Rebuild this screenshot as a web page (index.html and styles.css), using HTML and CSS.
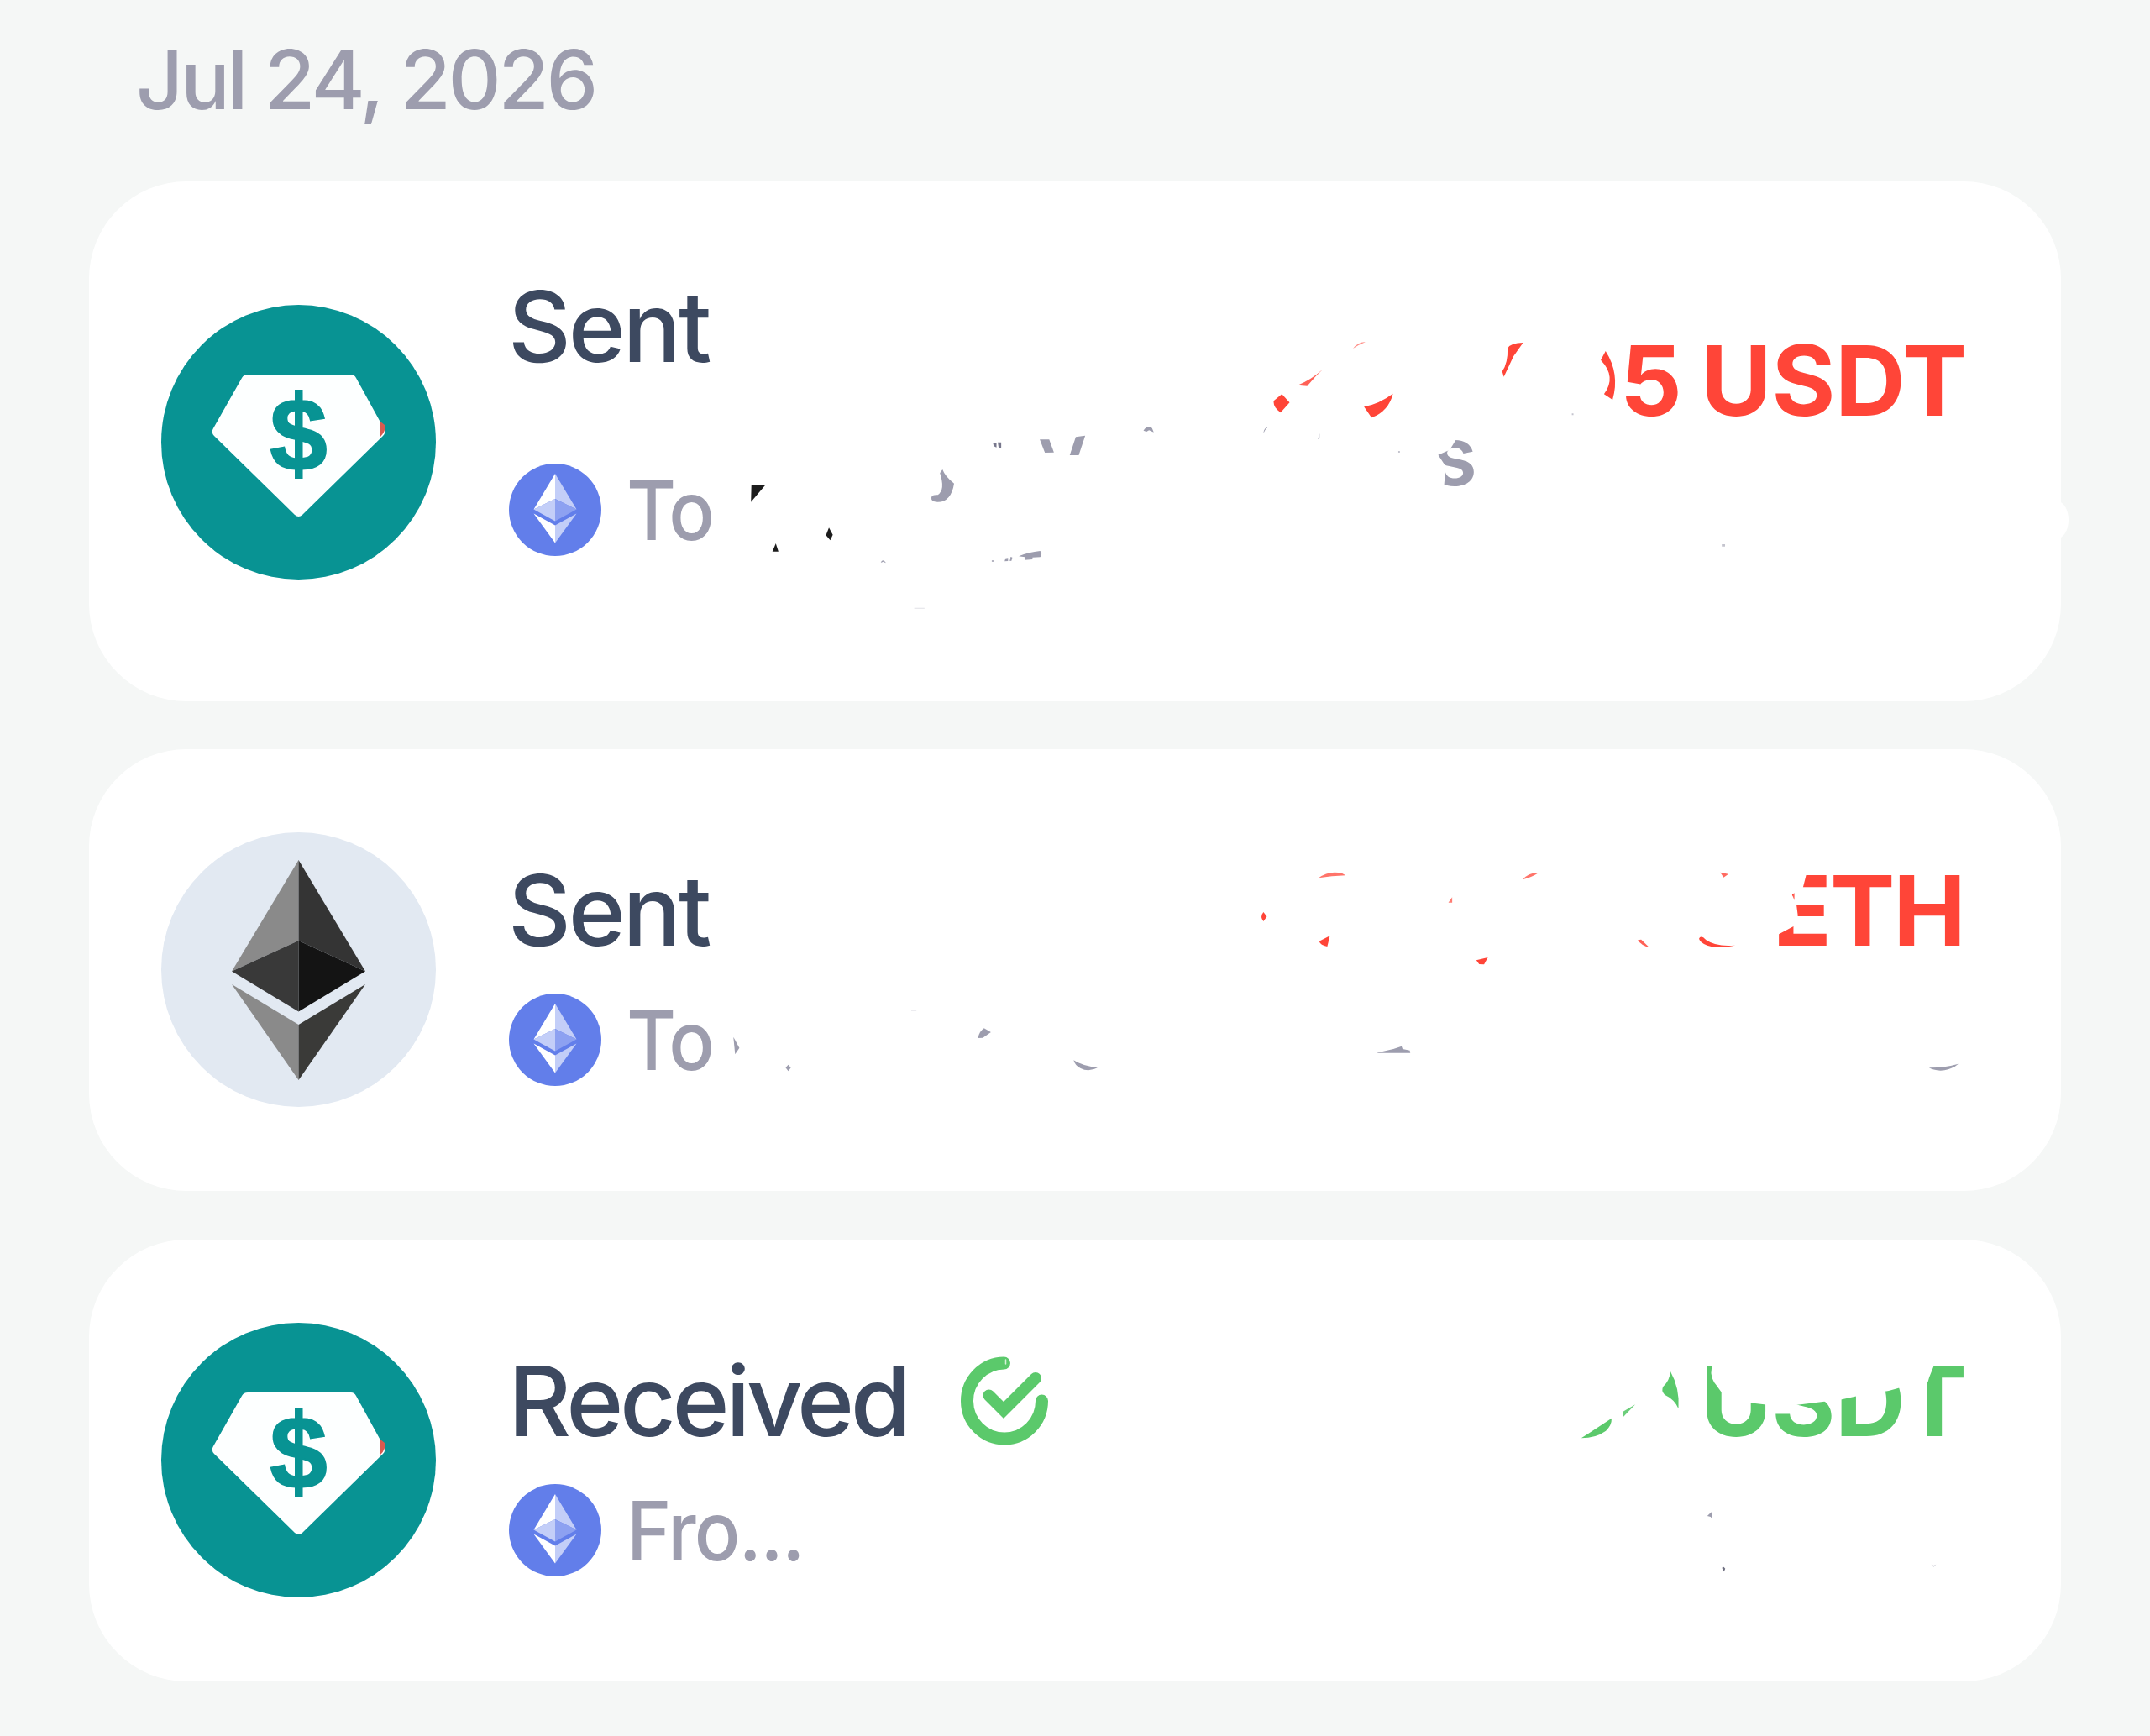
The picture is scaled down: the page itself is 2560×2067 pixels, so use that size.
FILE: index.html
```
<!DOCTYPE html>
<html lang="en">
<head>
<meta charset="utf-8">
<title>Transactions</title>
<link rel="stylesheet" href="styles.css">
</head>
<body>
<main class="history">
  <h1 class="date">Jul 24, 2026</h1>

  <article class="card card-tall">
    <svg class="coin" viewBox="0 0 327 327">
      <circle cx="163.500" cy="163.500" r="163.500" fill="#089393"/>
      <path d="M103 83H226Q230 83 232 87L265 147Q268 152 264 156L168 250Q163.500 254 159 250L63 156Q59 152 62 147L96 87Q98 83 103 83Z" fill="#fdffff"/>
      <path d="M261 139L266 143Q268 150 261 157Z" fill="#d95a50"/>
      <text x="163.500" y="197" class="dollar" text-anchor="middle">$</text>
      <path d="M159 101H168.500V207H159Z" fill="#089393"/>
    </svg>
    <div class="body">
      <div class="title"><span class="sent">Sent</span></div>
      <div class="sub">
        <svg class="chain" viewBox="0 0 110 110">
          <defs>
            <g id="eth">
              <circle cx="55" cy="55" r="55" fill="#627eea"/>
              <path d="M55 12L29.500 54.500L55 42Z" fill="#fff"/>
              <path d="M55 12L80.500 54.500L55 42Z" fill="#c3cef8"/>
              <path d="M29.500 54.500L55 42V68.500Z" fill="#c3cef8"/>
              <path d="M80.500 54.500L55 42V68.500Z" fill="#8da1f1"/>
              <path d="M29.500 59.500L55 73.500V94.500Z" fill="#fff"/>
              <path d="M80.500 59.500L55 73.500V94.500Z" fill="#c3cef8"/>
            </g>
          </defs>
          <use href="#eth"/>
        </svg>
        <span class="party">To</span>
      </div>
    </div>
    <div class="amount out"><span class="usdt">5 USDT</span></div>
    <svg class="marks" viewBox="106 216 2348 619">
      <ellipse cx="2450" cy="619" rx="13" ry="22" fill="#fff"/>
      <text x="1705" y="578" class="small-s">s</text>
      <g transform="translate(860 380) scale(.5102 .3333)">
        <g fill="#1c1c1c"><path d="M68 594L101 592L67 653Z"/><path d="M249 745L258 770L252 790L242 772Z"/><path d="M125 801L131 830H117Z"/></g>
        <g fill="#9d9dae">
          <path d="M514 537Q520 562 541 587Q534 654 502 653Q487 652 488 638Q488 627 503 628Q521 610 508 550Z"/>
          <path d="M741 430H763L774 476L753 477Z"/><path d="M825 421L847 416L832 486H811Z"/>
          <path d="M632 441H640V458Q632 456 632 441ZM643 440H651V459H645Z" fill="#77778c"/>
          <path d="M983 398Q993 376 1003 389L1007 404L996 397L990 402Z"/>
          <path d="M1263 408Q1264 388 1274 384L1267 396ZM1390 430L1394 409V424Z"/>
          <path d="M370 870Q373 855 381 868V871L376 866Z"/>
          <path d="M659 865L661 854L667 853V864ZM671 864L673 849L677 851L675 863ZM629 862h5v4h-5Z"/>
          <path d="M692 847Q715 832 742 828Q748 840 742 850L724 851V858L706 860V850Z"/>
          <path d="M337 384h14v3h-14ZM448 1031h24v3h-24Z" opacity=".3"/>
        </g>
        <g fill="#ff4538"><path d="M1306 268L1324 298L1303 334Q1285 315 1287 292Z"/><path d="M1401 180Q1382 207 1365 239L1343 236Q1374 217 1401 180Z" opacity=".85"/><path d="M1472 105Q1485 80 1501 82Q1486 91 1472 105Z" opacity=".6"/></g>
      </g>
      <g transform="translate(1480 380) scale(.6378 .3333)">
        <g fill="#fff"><path d="M345 420H401L386 467L366 484L345 500Z"/><path d="M345 484H364L380 530L377 560L375 605H345Z"/></g>
        <g fill="#ff4538"><path d="M226 313Q255 302 280 266Q272 329 240 352Z"/><path d="M494 104Q500 84 523 84L505 133L487 206L484 187Q495 155 494 104Z"/><path d="M677 114Q704 195 690 288L674 268Q698 206 668 146Z"/></g>
        <path d="M894 804h6v8h-6ZM290 471h3v6h-3ZM614 337h3v6h-3Z" fill="#9d9dae" opacity=".6"/>
      </g>
    </svg>
  </article>

  <article class="card">
    <svg class="coin" viewBox="0 0 327 327">
      <circle cx="163.500" cy="163.500" r="163.500" fill="#e2e9f2"/>
      <path d="M163.500 33L84 165.500L163.500 129Z" fill="#8a8a8a"/>
      <path d="M163.500 33L243 165.500L163.500 129Z" fill="#343434"/>
      <path d="M84 165.500L163.500 129V213.500Z" fill="#393939"/>
      <path d="M243 165.500L163.500 129V213.500Z" fill="#141414"/>
      <path d="M84 181L163.500 229V295Z" fill="#8a8a8a"/>
      <path d="M243 181L163.500 229V295Z" fill="#3a3a38"/>
    </svg>
    <div class="body">
      <div class="title"><span class="sent">Sent</span></div>
      <div class="sub"><svg class="chain" viewBox="0 0 110 110"><use href="#eth"/></svg><span class="party">To</span></div>
    </div>
    <div class="amount out"><span class="eth">ETH</span></div>
    <svg class="marks" viewBox="106 892 2348 526">
      <g transform="translate(860 1000) scale(.5102 .3333)">
        <g fill="#9d9dae"><path d="M26 704L40 743L30 766Z"/><path d="M154 803L160 814L154 826L148 814Z"/><path d="M597 708Q599 685 611 673L627 687L608 707Z"/><path d="M820 787Q838 806 876 814Q861 826 845 821Q824 812 820 787Z"/><path d="M441 608h12v3h-12Z" opacity=".3"/></g>
        <g fill="#ff4538"><path d="M1263 258L1271 274L1263 291Q1254 275 1263 258Z"/><path d="M1418 343L1412 381Q1396 376 1393 362Z"/><path d="M1392 136Q1415 108 1446 119L1455 127Q1422 129 1392 136Z" opacity=".75"/></g>
      </g>
      <g transform="translate(1600 1000) scale(.574 .3333)">
        <path d="M880 100H963L952 175L930 195L939 230L942 271L933 309L901 338L880 350Z" fill="#fff"/>
        <g fill="#ff4538"><path d="M930 195L935 190V216ZM371 142Q384 116 404 118Q390 134 371 142Z" opacity=".75"/><path d="M217 224L225 205V224Z" opacity=".7"/><path d="M781 116L798 122L788 134Z" opacity=".8"/><path d="M275 430L299 420L291 445L281 444Z"/><path d="M610 358L617 356L634 385Q616 376 610 358Z" opacity=".85"/><path d="M737 353Q739 343 746 349Q765 384 812 377Q775 390 754 377Q739 367 737 353Z"/></g>
        <g fill="#9d9dae"><path d="M67 761L103 747L120 737L122 747L137 752L138 761Z"/><path d="M1214 814Q1247 814 1275 800Q1261 822 1238 824Q1222 823 1214 814Z"/></g>
      </g>
    </svg>
  </article>

  <article class="card">
    <svg class="coin" viewBox="0 0 327 327">
      <circle cx="163.500" cy="163.500" r="163.500" fill="#089393"/>
      <path d="M103 83H226Q230 83 232 87L265 147Q268 152 264 156L168 250Q163.500 254 159 250L63 156Q59 152 62 147L96 87Q98 83 103 83Z" fill="#fdffff"/>
      <path d="M261 139L266 143Q268 150 261 157Z" fill="#d95a50"/>
      <text x="163.500" y="197" class="dollar" text-anchor="middle">$</text>
      <path d="M159 101H168.500V207H159Z" fill="#089393"/>
    </svg>
    <div class="body">
      <div class="title"><span class="received">Received</span>
        <svg class="check" viewBox="0 0 104 106" fill="none" stroke="#5bc96b" stroke-width="15" stroke-linecap="round"><path d="M51.500 8A44.500 45 0 1 0 96.500 53"/><path d="M33.500 46.500L51 64L89 26" stroke-width="14"/><path d="M53.500 4V9" stroke="#d7f3da" stroke-width="1.500"/></svg>
      </div>
      <div class="sub"><svg class="chain" viewBox="0 0 110 110"><use href="#eth"/></svg><span class="party">Fro...</span></div>
    </div>
    <div class="amount in"><span class="usdt">USDT</span></div>
    <svg class="marks" viewBox="106 1476 2348 526">
      <g transform="translate(1840 1580) scale(.3571 .3333)">
        <path d="M558 110L553 165Q556 190 568 205L592 240V272H694L742 278L770 300L840 278L948 264L975 262L995 257L1043 246L1145 228L1193 214L1230 200L1276 195L1280 180L1298 132V110Z" fill="#fff"/>
        <g fill="#5bc96b"><path d="M120 397Q176 358 221 326Q222 350 202 371Q168 397 120 397Z"/><path d="M258 303L300 277L258 323Z" opacity=".9"/><path d="M417 158Q449 219 444 292Q432 259 398 242Q385 228 393 213Q415 191 417 158Z"/></g>
        <g fill="#9d9dae"><path d="M540 675L554 661L557 686L551 678Z"/><path d="M589 860L595 857L600 863L596 874Z" fill="#6f6f80"/><path d="M1287 848L1295 852L1303 848L1295 857Z" opacity=".6"/></g>
      </g>
    </svg>
  </article>
</main>
</body>
</html>
```
FILE: styles.css
```
* { box-sizing: border-box; }
body {
  margin: 0;
  background: #f5f7f6;
  font-family: Inter, "Liberation Sans", sans-serif;
}
.history {
  display: flex;
  flex-direction: column;
  gap: 58px;
  height: 2067px;
  padding: 35px 106px 0;
  overflow: hidden;
}
.date {
  margin: 0 0 3px 56px;
  color: #9d9dae;
  font-size: 98px;
  font-weight: 500;
  line-height: 120px;
  letter-spacing: -3.300px;
  white-space: nowrap;
}
.card {
  position: relative;
  display: flex;
  align-items: flex-start;
  height: 526px;
  padding: 132px 113px 0 86px;
  border-radius: 116px;
  background: #fff;
  flex: none;
}
.card-tall { height: 619px; padding-top: 113px; margin-bottom: -1px; }
.coin { flex: none; width: 327px; height: 327px; margin-right: 87px; }
.card-tall .coin { margin-top: 34px; }
.card:not(.card-tall) .coin { margin-top: -33px; }
.dollar {
  font: bold 123px "Liberation Sans", Arial, sans-serif;
  fill: #089393;
  stroke: #089393;
  stroke-width: 2px;
}
.body { display: flex; flex-direction: column; gap: 39px; }
.card-tall .body { gap: 103px; }
.title {
  display: flex;
  align-items: center;
  gap: 64px;
  height: 120px;
  margin-left: -1px;
  color: #3d4960;
  font-size: 116px;
  font-weight: 500;
  line-height: 120px;
  white-space: nowrap;
}
.sub {
  display: flex;
  align-items: center;
  gap: 30px;
  height: 110px;
  color: #9d9dae;
  font-size: 98px;
  font-weight: 500;
  line-height: 110px;
  white-space: nowrap;
}
.chain { width: 110px; height: 110px; flex: none; }
.check { width: 104px; height: 106px; flex: none; }
.amount {
  margin-left: auto;
  font-size: 116px;
  font-weight: 700;
  line-height: 120px;
  white-space: nowrap;
}
.card-tall .amount { margin-top: 64px; }
.out { color: #ff4538; }
.in { color: #5bc96b; }
.sent { letter-spacing: -3.300px; }
.received { letter-spacing: -4.400px; }
.party {
  padding-top: 2px;
  letter-spacing: -2px;
  transform: scaleX(.925);
  transform-origin: left;
}
.usdt { letter-spacing: -.300px; word-spacing: -5px; margin-right: -1px; }
.eth { letter-spacing: -2px; margin-right: 2px; }
.small-s { font-size: 98px; font-weight: 600; fill: #9d9dae; }
.marks {
  position: absolute;
  inset: 0;
  width: 100%;
  height: 100%;
  overflow: visible;
}
```
